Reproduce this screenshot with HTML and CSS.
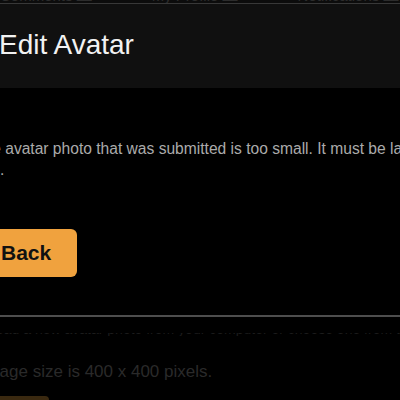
FILE: index.html
```html
<!DOCTYPE html>
<html>
<head>
<meta charset="utf-8">
<link rel="stylesheet" href="styles.css">
</head>
<body>
<nav class="topnav">
  <span class="nav-item">Comments ▬</span>
  <span class="nav-item">My Profile ▬</span>
  <span class="nav-item">Notifications ▬</span>
</nav>
<div class="modal">
  <div class="modal-header">Edit Avatar</div>
  <div class="modal-body">
    <p class="msg"><span class="line">The avatar photo that was submitted is too small. It must be larger than</span><span class="line">400.</span></p>
    <a class="btn">Back</a>
  </div>
</div>
<div class="page">
  <div class="ticks"><span class="ticks-text">Upload a new avatar photo from your computer or choose one from the gallery below to continue</span></div>
  <p class="hint">Minimum image size is 400 x 400 pixels.</p>
  <div class="page-btn"></div>
</div>
</body>
</html>
```
FILE: styles.css
```css
html, body {
  margin: 0;
  padding: 0;
  background: #000;
  overflow: hidden;
  width: 400px;
  height: 400px;
}
body {
  font-family: "Liberation Sans", Arial, sans-serif;
}
.topnav {
  height: 3px;
  overflow: hidden;
  background: #0c0c0c;
  border-bottom: 1px solid #383838;
  display: flex;
  gap: 60px;
  white-space: nowrap;
}
.nav-item {
  display: block;
  font-size: 15px;
  line-height: 15px;
  color: #2c2c2c;
  margin-top: -12px;
}
.modal {
  margin-left: -25px;
  width: 460px;
}
.modal-header {
  background: #101010;
  color: #f2f2f2;
  font-size: 28px;
  line-height: 32px;
  padding: 25px 24px 27px;
}
.modal-body {
  padding: 50px 0 38px;
  border-bottom: 2px solid #4e4e4e;
}
.msg {
  margin: 0 0 49px -1px;
  font-size: 15.6px;
  line-height: 21px;
  color: #ababab;
  white-space: nowrap;
}
.line {
  display: block;
}
.btn {
  display: block;
  width: fit-content;
  background: #f0a23e;
  color: #111;
  font-weight: bold;
  font-size: 21px;
  line-height: 24px;
  padding: 12px 26px;
  border-radius: 6px;
}
.page {
  margin-left: -25px;
  padding-top: 16px;
}
.ticks {
  height: 3px;
  overflow: hidden;
  white-space: nowrap;
}
.ticks-text {
  display: block;
  font-size: 14px;
  line-height: 14px;
  color: #1c1c1c;
  margin-top: -11px;
}
.hint {
  margin: 25px 0 0;
  font-size: 17px;
  line-height: 22px;
  color: #2a2a2a;
  white-space: nowrap;
  text-indent: -67px;
}
.page-btn {
  margin-top: 13px;
  width: 74px;
  height: 30px;
  background: #3a2910;
  border-radius: 4px;
}
```
